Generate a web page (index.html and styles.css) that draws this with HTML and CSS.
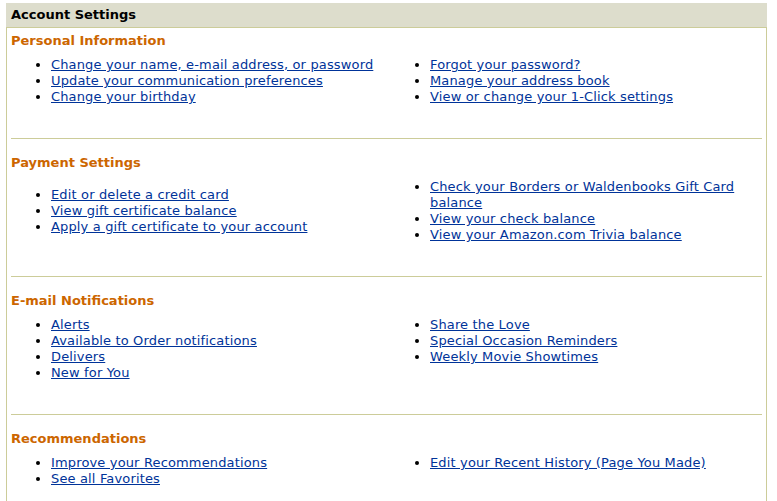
FILE: index.html
```html
<!DOCTYPE html>
<html>
<head>
<meta charset="utf-8">
<title>Account Settings</title>
<link rel="stylesheet" href="styles.css">
</head>
<body>
<div class="panel">
  <div class="panel-head">Account Settings</div>
  <div class="panel-body">
    <section class="group">
      <h3 class="group-title">Personal Information</h3>
      <div class="cols">
        <ul class="links">
          <li><a href="#">Change your name, e-mail address, or password</a></li>
          <li><a href="#">Update your communication preferences</a></li>
          <li><a href="#">Change your birthday</a></li>
        </ul>
        <ul class="links">
          <li><a href="#">Forgot your password?</a></li>
          <li><a href="#">Manage your address book</a></li>
          <li><a href="#">View or change your 1-Click settings</a></li>
        </ul>
      </div>
    </section>
    <hr class="divider">
    <section class="group">
      <h3 class="group-title">Payment Settings</h3>
      <div class="cols">
        <ul class="links middle">
          <li><a href="#">Edit or delete a credit card</a></li>
          <li><a href="#">View gift certificate balance</a></li>
          <li><a href="#">Apply a gift certificate to your account</a></li>
        </ul>
        <ul class="links">
          <li><a href="#">Check your Borders or Waldenbooks Gift Card balance</a></li>
          <li><a href="#">View your check balance</a></li>
          <li><a href="#">View your Amazon.com Trivia balance</a></li>
        </ul>
      </div>
    </section>
    <hr class="divider">
    <section class="group">
      <h3 class="group-title">E-mail Notifications</h3>
      <div class="cols">
        <ul class="links">
          <li><a href="#">Alerts</a></li>
          <li><a href="#">Available to Order notifications</a></li>
          <li><a href="#">Delivers</a></li>
          <li><a href="#">New for You</a></li>
        </ul>
        <ul class="links">
          <li><a href="#">Share the Love</a></li>
          <li><a href="#">Special Occasion Reminders</a></li>
          <li><a href="#">Weekly Movie Showtimes</a></li>
        </ul>
      </div>
    </section>
    <hr class="divider">
    <section class="group">
      <h3 class="group-title">Recommendations</h3>
      <div class="cols">
        <ul class="links">
          <li><a href="#">Improve your Recommendations</a></li>
          <li><a href="#">See all Favorites</a></li>
        </ul>
        <ul class="links">
          <li><a href="#">Edit your Recent History (Page You Made)</a></li>
        </ul>
      </div>
    </section>
  </div>
</div>
</body>
</html>
```
FILE: styles.css
```css
html, body {
  margin: 0;
  padding: 0;
  background: #ffffff;
}

body {
  font-family: "DejaVu Sans", Verdana, sans-serif;
  font-size: 13px;
  line-height: 16px;
  color: #000000;
}

.panel {
  width: 761px;
  margin: 3px 0 0 6px;
}

.panel-head {
  height: 24px;
  line-height: 24px;
  padding: 0 5px;
  background: #ddddcc;
  border-bottom: 1px solid #cccc99;
  font-weight: bold;
  color: #000000;
}

.panel-body {
  border-left: 1px solid #cccc99;
  border-right: 1px solid #cccc99;
  padding: 5px 4px 15px 4px;
}

.group-title {
  margin: 0;
  font-size: 13px;
  line-height: 16px;
  font-weight: bold;
  color: #cc6600;
}

.cols {
  display: grid;
  grid-template-columns: 379px 1fr;
  margin-top: 8px;
}

.links {
  margin: 0;
  padding: 0 0 0 40px;
  list-style: disc;
}

.links.middle {
  align-self: center;
}

.links a {
  color: #003399;
  text-decoration: underline;
  letter-spacing: 0.15px;
}

.divider {
  border: 0;
  border-top: 1px solid #cccc99;
  height: 0;
  margin: 33px 0 16px 0;
}
```
